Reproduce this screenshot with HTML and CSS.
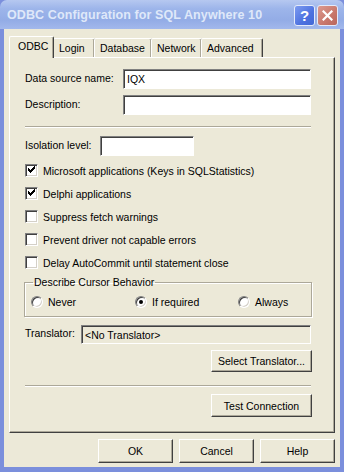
FILE: index.html
```html
<!DOCTYPE html>
<html>
<head>
    <title>ODBC Configuration for SQL Anywhere 10</title>
    <meta charset="UTF-8">
    <link rel="stylesheet" href="styles.css">
</head>
<body>
<div class="window">
    <div class="titlebar">
        <span class="title">ODBC Configuration for SQL Anywhere 10</span>
        <div class="caption-btns">
            <span class="cap help">?</span>
            <span class="cap close">
                <svg width="11" height="11" viewBox="0 0 11 11"><path d="M1.5 1.5 L9.5 9.5 M9.5 1.5 L1.5 9.5" stroke="#fff" stroke-width="2.2" stroke-linecap="square"/></svg>
            </span>
        </div>
    </div>

    <div class="client">
        <div class="tabs">
            <div class="tab active">ODBC</div>
            <div class="tab">Login</div>
            <div class="tab">Database</div>
            <div class="tab">Network</div>
            <div class="tab">Advanced</div>
        </div>

        <div class="panel">
            <div class="content">
                <div class="row">
                    <label class="lbl w98">Data source name:</label>
                    <div class="field wide">IQX</div>
                </div>
                <div class="row r2">
                    <label class="lbl w98">Description:</label>
                    <div class="field wide"></div>
                </div>

                <div class="sep s1"></div>

                <div class="row r3">
                    <label class="lbl w75">Isolation level:</label>
                    <div class="field iso"></div>
                </div>

                <div class="check first"><span class="box on"></span>Microsoft applications (Keys in SQLStatistics)</div>
                <div class="check"><span class="box on"></span>Delphi applications</div>
                <div class="check"><span class="box"></span>Suppress fetch warnings</div>
                <div class="check"><span class="box"></span>Prevent driver not capable errors</div>
                <div class="check"><span class="box"></span>Delay AutoCommit until statement close</div>

                <fieldset class="group">
                    <legend>Describe Cursor Behavior</legend>
                    <div class="radios">
                        <div class="radio"><span class="dot"></span>Never</div>
                        <div class="radio"><span class="dot on"></span>If required</div>
                        <div class="radio"><span class="dot"></span>Always</div>
                    </div>
                </fieldset>

                <div class="row r4">
                    <label class="lbl w56">Translator:</label>
                    <div class="field disabled">&lt;No Translator&gt;</div>
                </div>
                <div class="right"><button class="btn b1">Select Translator...</button></div>

                <div class="sep s2"></div>

                <div class="right"><button class="btn b2">Test Connection</button></div>
            </div>
        </div>

        <div class="dialog-buttons">
            <button class="btn dlg">OK</button>
            <button class="btn dlg">Cancel</button>
            <button class="btn dlg">Help</button>
        </div>
    </div>
</div>
</body>
</html>
```

FILE: styles.css
```css
* { box-sizing: border-box; }
body { margin: 0; font-family: "Liberation Sans", Arial, sans-serif; font-size: 10.5px; color: #000; }

.window { width: 344px; height: 472px; background: #7b8fdc; padding: 0 4px 5px 4px; display: flex; flex-direction: column; }
.titlebar { height: 29px; margin: 0 -4px; padding: 0 6px 0 7px; display: flex; align-items: center; justify-content: space-between;
    background: linear-gradient(#b6c8f0, #9db5ea 30%, #93ace6 70%, #a2b8ec); border-radius: 7px 7px 0 0; }
.title { color: #dfe8f9; font-weight: bold; font-size: 12.5px; letter-spacing: 0.1px; padding-top: 1px; }
.caption-btns { display: flex; gap: 2px; padding-top: 1px; }
.cap { width: 21px; height: 21px; border: 1px solid #e3eafa; border-radius: 3px; display: flex; align-items: center; justify-content: center;
    color: #fff; font-weight: bold; font-size: 15px; }
.help { background: linear-gradient(135deg, #7d9bf0, #4d72e0 60%, #4267d6); }
.close { background: linear-gradient(135deg, #dc9a8f, #c8776b 60%, #b9665b); }

.client { flex: 1; background: #ece9d8; padding: 6px 5px 0 5px; display: flex; flex-direction: column; }

.tabs { display: flex; align-items: flex-end; height: 22px; }
.tab { height: 19px; padding: 0 5px; border: 1px solid #fff; border-right: 1px solid #404040; border-bottom: none;
    box-shadow: inset -1px 0 #aca899; line-height: 18px; border-radius: 2px 2px 0 0; margin-left: -1px; }
.tab:nth-child(1) { width: 45px; }
.tab:nth-child(2) { width: 42px; }
.tab:nth-child(3) { width: 58px; }
.tab:nth-child(4) { width: 51px; }
.tab:nth-child(5) { width: 62px; }
.tab.active { height: 22px; margin-left: 0; padding-left: 8px; position: relative; top: 1px; background: #ece9d8; z-index: 1; line-height: 19px; }

.panel { height: 376px; border: 1px solid #fff; border-right: 1px solid #404040; border-bottom: 1px solid #404040;
    box-shadow: inset -1px -1px #aca899; padding: 11px 0 0 15px; }
.content { width: 286px; }

.row { display: flex; align-items: center; height: 20px; }
.r2 { margin-top: 6px; }
.r3 { margin-top: 8px; }
.r4 { margin-top: 8px; height: 19px; }
.lbl { flex: none; margin-top: -3px; }
.w98 { width: 98px; }
.w75 { width: 75px; }
.w56 { width: 56px; }

.field { height: 100%; background: #fff; border: 1px solid; border-color: #808080 #fff #fff #808080;
    box-shadow: inset 1px 1px #404040; padding: 2px 3px; line-height: 14px; }
.wide { flex: 1; }
.iso { width: 94px; }
.disabled { flex: 1; background: #ece9d8; }

.sep { height: 2px; border-top: 1px solid #aca899; border-bottom: 1px solid #fff; }
.s1 { margin-top: 11px; }
.s2 { margin-top: 13px; }

.check { display: flex; align-items: center; height: 13px; margin-top: 10px; }
.check.first { margin-top: 8px; }
.box { width: 13px; height: 13px; margin-right: 5px; background: #fff; border: 1px solid; border-color: #808080 #fff #fff #808080;
    box-shadow: inset 1px 1px #404040, inset -1px -1px #d4d0c8; flex: none; position: relative; }
.box.on::after { content: ""; position: absolute; left: 2px; top: 1px; width: 7px; height: 7px;
    background: url("data:image/svg+xml;utf8,<svg xmlns='http://www.w3.org/2000/svg' width='7' height='7'><path d='M0 2h1v1h1v1h1v-1h1v-1h1v-1h1v-1h1v3h-1v1h-1v1h-1v1h-1v1h-1v-1h-1v-1h-1z' fill='black'/></svg>"); }

.group { margin: 7px 0 0 -1px; padding: 0 6px 8px 6px; border: 1px solid #aca899; box-shadow: inset 1px 1px #fff, 1px 1px #fff; width: 288px; }
.group legend { padding: 0 1px; margin-left: 2px; line-height: 13px; }
.radios { display: grid; grid-template-columns: 104px 103px 1fr; margin-top: 6px; }
.radio { display: flex; align-items: center; height: 13px; }
.dot { width: 12px; height: 12px; border-radius: 50%; margin-right: 5px; flex: none; background: #fff;
    border: 1px solid; border-color: #808080 #fff #fff #808080; box-shadow: inset 1px 1px #404040, inset -1px -1px #d4d0c8; position: relative; }
.dot.on::after { content: ""; position: absolute; left: 3px; top: 3px; width: 4px; height: 4px; background: #000; border-radius: 50%; }

.right { display: flex; justify-content: flex-end; }
.btn { font: inherit; color: #000; background: #ece9d8; border: 1px solid; border-color: #fff #404040 #404040 #fff;
    box-shadow: inset -1px -1px #aca899; padding: 0; }
.b1 { width: 101px; height: 22px; margin-top: 6px; margin-right: -1px; }
.b2 { width: 101px; height: 23px; margin-top: 7px; margin-right: -1px; }

.dialog-buttons { display: flex; justify-content: flex-end; gap: 6px; margin-top: 6px; }
.dlg { width: 75px; height: 24px; }
```
